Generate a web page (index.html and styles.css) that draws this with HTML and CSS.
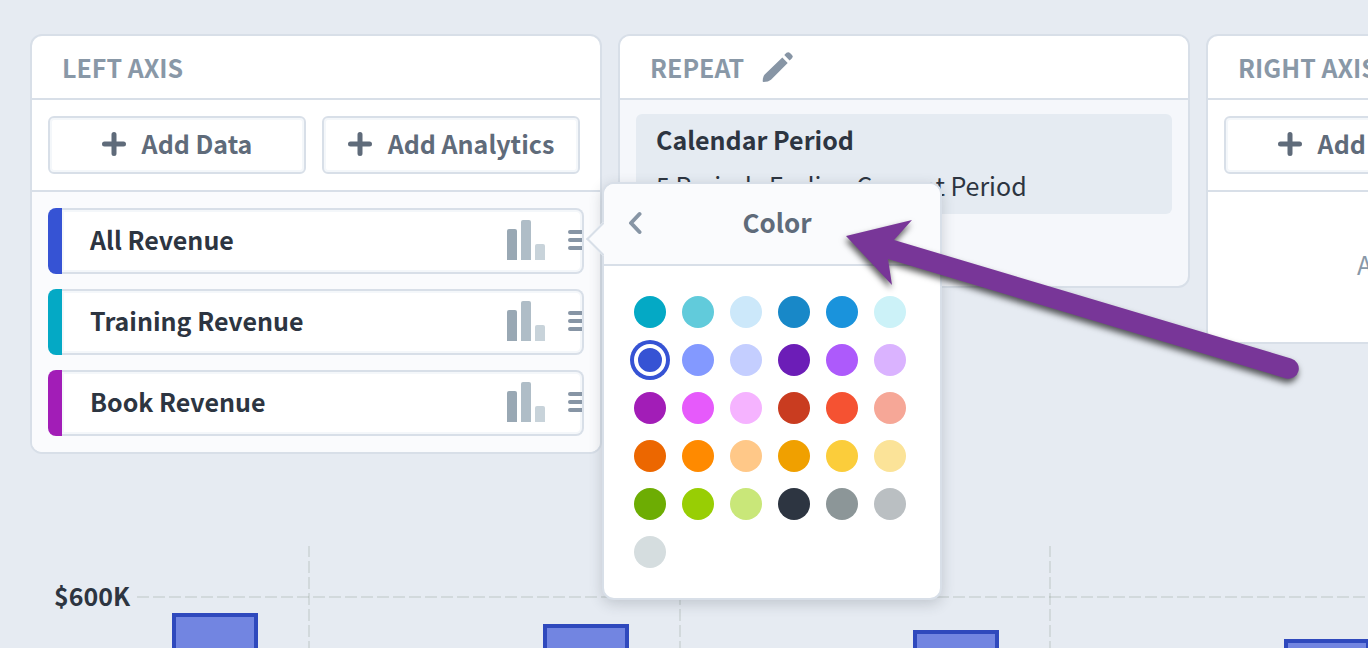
FILE: index.html
```html
<!DOCTYPE html>
<html lang="en">
<head>
<meta charset="utf-8">
<title>Chart builder</title>
<link rel="stylesheet" href="styles.css">
</head>
<body>
<svg class="symbols" aria-hidden="true">
  <symbol id="plus" viewBox="0 0 24 24"><path d="M12 2.500v19M2.500 12h19" stroke="currentColor" stroke-width="5" stroke-linecap="round"/></symbol>
  <symbol id="bars" viewBox="0 0 38 40">
    <path d="M0 40V11q0-2 2-2h6q2 0 2 2v29z" fill="#99a8b4"/>
    <path d="M14 40V2q0-2 2-2h6q2 0 2 2v38z" fill="#afbdc7"/>
    <path d="M28 40V26q0-2 2-2h6q2 0 2 2v14z" fill="#c8d3da"/>
  </symbol>
  <symbol id="menu" viewBox="0 0 14 22"><path d="M2 3h16M2 11h16M2 19h16" stroke="#8795a5" stroke-width="4" stroke-linecap="round"/></symbol>
</svg>

<main class="builder">
  <div class="panels">
    <section class="panel">
      <header class="panel-head"><h2>LEFT AXIS</h2></header>
      <div class="toolbar">
        <button class="btn" type="button"><svg class="plus"><use href="#plus"/></svg><span>Add Data</span></button>
        <button class="btn" type="button"><svg class="plus"><use href="#plus"/></svg><span>Add Analytics</span></button>
      </div>
      <ul class="series-list">
        <li class="series blue"><div class="card"><span class="name">All Revenue</span><svg class="bars"><use href="#bars"/></svg><button class="menu" type="button" aria-label="All Revenue options"><svg><use href="#menu"/></svg></button></div></li>
        <li class="series teal"><div class="card"><span class="name">Training Revenue</span><svg class="bars"><use href="#bars"/></svg><button class="menu" type="button" aria-label="Training Revenue options"><svg><use href="#menu"/></svg></button></div></li>
        <li class="series purple"><div class="card"><span class="name">Book Revenue</span><svg class="bars"><use href="#bars"/></svg><button class="menu" type="button" aria-label="Book Revenue options"><svg><use href="#menu"/></svg></button></div></li>
      </ul>

      <div class="popover" role="dialog" aria-label="Color">
        <header class="popover-head">
          <button class="back" type="button" aria-label="Back"><svg viewBox="0 0 14 24"><path d="M11.500 3L3 12l8.500 9" fill="none" stroke="#8795a5" stroke-width="4" stroke-linecap="round" stroke-linejoin="round"/></svg></button>
          <h3>Color</h3>
        </header>
        <div class="swatches">
          <button type="button" aria-label="Teal" style="background:#04a9c5"></button>
          <button type="button" aria-label="Light teal" style="background:#61cbdb"></button>
          <button type="button" aria-label="Pale blue" style="background:#cce8fa"></button>
          <button type="button" aria-label="Ocean" style="background:#1888c8"></button>
          <button type="button" aria-label="Sky" style="background:#1a93dc"></button>
          <button type="button" aria-label="Pale cyan" style="background:#ccf2f8"></button>
          <button type="button" aria-label="Blue" aria-pressed="true" class="selected" style="background:#3653d4"></button>
          <button type="button" aria-label="Periwinkle" style="background:#8399ff"></button>
          <button type="button" aria-label="Pale periwinkle" style="background:#c4ceff"></button>
          <button type="button" aria-label="Indigo" style="background:#6c1db7"></button>
          <button type="button" aria-label="Violet" style="background:#ad5afb"></button>
          <button type="button" aria-label="Lavender" style="background:#dab3ff"></button>
          <button type="button" aria-label="Purple" style="background:#a21db7"></button>
          <button type="button" aria-label="Magenta" style="background:#e65afb"></button>
          <button type="button" aria-label="Pink" style="background:#f5b3ff"></button>
          <button type="button" aria-label="Brick" style="background:#c93c20"></button>
          <button type="button" aria-label="Red" style="background:#f55232"></button>
          <button type="button" aria-label="Salmon" style="background:#f6a797"></button>
          <button type="button" aria-label="Dark orange" style="background:#ec6700"></button>
          <button type="button" aria-label="Orange" style="background:#ff8a00"></button>
          <button type="button" aria-label="Peach" style="background:#ffc888"></button>
          <button type="button" aria-label="Amber" style="background:#f0a000"></button>
          <button type="button" aria-label="Yellow" style="background:#fbcd3b"></button>
          <button type="button" aria-label="Pale yellow" style="background:#fbe398"></button>
          <button type="button" aria-label="Green" style="background:#6dad03"></button>
          <button type="button" aria-label="Lime" style="background:#98ce04"></button>
          <button type="button" aria-label="Pale lime" style="background:#c9e779"></button>
          <button type="button" aria-label="Charcoal" style="background:#2d3541"></button>
          <button type="button" aria-label="Gray" style="background:#8c9698"></button>
          <button type="button" aria-label="Silver" style="background:#babfc2"></button>
          <button type="button" aria-label="Pale gray" style="background:#d5dddf"></button>
        </div>
      </div>
    </section>

    <section class="panel repeat">
      <header class="panel-head">
        <h2>REPEAT</h2>
        <button class="edit" type="button" aria-label="Edit repeat"><svg viewBox="0 0 32 32"><path d="M20.300 6.600l5.400 5.400L9 28.700Q6.500 31 1.500 31q-.9 0-.8-1Q1 25 2.700 23.400zM22.300 4l2.200-2.200Q26.500.4 28 2l2 2q1.700 1.500 0 3.200L27.600 9.500z" fill="#8795a5"/></svg></button>
      </header>
      <div class="repeat-body">
        <div class="period">
          <strong>Calendar Period</strong>
          <span>5 Periods Ending Current Period</span>
        </div>
      </div>
    </section>

    <section class="panel">
      <header class="panel-head"><h2>RIGHT AXIS</h2></header>
      <div class="toolbar">
        <button class="btn" type="button"><svg class="plus"><use href="#plus"/></svg><span>Add Data</span></button>
        <button class="btn" type="button"><svg class="plus"><use href="#plus"/></svg><span>Add Analytics</span></button>
      </div>
      <p class="empty">Add Data or Analytics</p>
    </section>
  </div>

  <div class="chart">
    <span class="tick">$600K</span>
    <svg class="plot" role="img" aria-label="Revenue by period">
      <path d="M0 51H1400" class="grid" stroke-dasharray="12 4"/>
      <path d="M172 0V102M543 0V102M913 0V102" class="grid" stroke-dasharray="12 4" stroke-dashoffset="1"/>
      <g class="columns">
        <rect x="37" y="69" width="82" height="60"/>
        <rect x="408" y="80" width="82" height="60"/>
        <rect x="778" y="86" width="82" height="60"/>
        <rect x="1149" y="95" width="82" height="60"/>
      </g>
    </svg>
  </div>

  <svg class="pointer" viewBox="0 0 470 170" aria-hidden="true">
    <path d="M6 16L72 0L54 20L451 138.500A10 10 0 0 1 446 158.500L48 39L52 65Z" fill="#783698"/>
  </svg>
</main>
</body>
</html>
```

FILE: styles.css
```css
* { box-sizing: border-box; }
body {
  margin: 0;
  overflow: hidden;
  background: #e6ebf2;
  color: #2d3541;
  font: 25px/32px "Noto Sans CJK SC", "Open Sans", sans-serif;
}
h2, h3, p, ul { margin: 0; padding: 0; font-size: inherit; }
button { font: inherit; border: 0; padding: 0; background: none; color: inherit; cursor: pointer; }
svg { display: block; }
.symbols { display: none; }

.builder {
  position: relative;
  display: flex;
  flex-direction: column;
  min-height: 100vh;
  padding: 34px 0 0 30px;
  overflow: hidden;
}
.panels {
  display: grid;
  grid-template-columns: repeat(3, minmax(572px, 1fr));
  gap: 16px;
  align-items: start;
}
.panel {
  position: relative;
  background: #fff;
  border: 2px solid #d8dfe8;
  border-radius: 12px;
}
.panel-head {
  display: flex;
  align-items: center;
  gap: 18px;
  height: 64px;
  padding: 0 30px;
  border-bottom: 2px solid #d8dfe8;
  color: #8998a7;
}
.edit svg { width: 32px; height: 32px; }

.toolbar {
  display: grid;
  grid-template-columns: 1fr 1fr;
  gap: 16px;
  padding: 16px 20px 16px 16px;
  border-bottom: 2px solid #d8dfe8;
}
.btn {
  display: flex;
  align-items: center;
  justify-content: center;
  gap: 16px;
  height: 58px;
  padding-bottom: 2px;
  border: 2px solid #d8dfe8;
  border-radius: 6px;
  box-shadow: inset 0 0 0 2px #f4f7fa;
  background: #fff;
  color: #5f6b7a;
  font-weight: 700;
}
.btn span { padding-bottom: 2px; }
.plus { width: 24px; height: 24px; }

.series-list {
  display: grid;
  gap: 15px;
  padding: 16px;
  list-style: none;
  background: #fafbfd;
  border-radius: 0 0 10px 10px;
}
.series {
  height: 66px;
  padding-left: 14px;
  border-radius: 8px;
}
.card {
  display: flex;
  align-items: center;
  height: 100%;
  padding-bottom: 2px;
  overflow: hidden;
  border: 2px solid #d8dfe8;
  border-left: 0;
  border-radius: 0 8px 8px 0;
  background: #fff;
  box-shadow: inset 0 0 0 2px #f4f7fa;
}
.blue { background: linear-gradient(90deg, #3653d4 14px, transparent 14px); }
.teal { background: linear-gradient(90deg, #04a9c5 14px, transparent 14px); }
.purple { background: linear-gradient(90deg, #a21db7 14px, transparent 14px); }
.name { flex: 1; padding: 0 0 2px 28px; font-weight: 700; }
.bars { width: 38px; height: 40px; margin-right: 23px; }
.menu svg { width: 14px; height: 22px; }

.repeat { background: #f5f7fb; }
.repeat .panel-head { background: #fff; border-radius: 10px 10px 0 0; }
.repeat-body { padding: 14px 16px 72px; }
.period {
  display: grid;
  gap: 14px;
  height: 100px;
  padding: 9px 20px 13px;
  border-radius: 6px;
  background: #e5ebf2;
}
.empty { padding: 56px 20px 62px 149px; color: #8998a7; white-space: nowrap; }

.popover {
  position: absolute;
  z-index: 2;
  top: 146px;
  left: calc(100% + 2px);
  width: 340px;
  background: #fff;
  border: 2px solid #d8dfe8;
  border-radius: 12px;
  box-shadow: 0 4px 14px rgba(45, 53, 65, 0.2);
}
.popover::before {
  content: "";
  position: absolute;
  top: 43px;
  left: -13px;
  width: 22px;
  height: 22px;
  transform: rotate(45deg);
  border: solid #d8dfe8;
  border-width: 0 0 2px 2px;
  background: #fafbfd;
}
.popover-head {
  position: relative;
  display: grid;
  grid-template-columns: 14px 1fr 14px;
  align-items: center;
  height: 82px;
  padding: 0 24px 2px;
  border-bottom: 2px solid #d8dfe8;
  border-radius: 10px 10px 0 0;
  background: #fafbfd;
  color: #5f6b7a;
  text-align: center;
}
.popover-head h3 { padding: 0 0 2px 10px; font-size: 26px; }
.back svg { width: 14px; height: 24px; }
.swatches {
  display: grid;
  grid-template-columns: repeat(6, 32px);
  gap: 16px;
  padding: 30px;
}
.swatches button { width: 32px; height: 32px; border-radius: 50%; }
.swatches .selected {
  border: 4px solid #fff;
  box-shadow: 0 0 0 4px #3653d4;
}

.chart {
  position: absolute;
  top: 546px;
  left: 54px;
  right: 0;
  bottom: 0;
  display: grid;
  grid-template-columns: 83px 1fr;
  overflow: hidden;
}
.tick { padding-top: 33px; font-weight: 700; }
.plot { width: 100%; height: 102px; overflow: hidden; }
.grid { fill: none; stroke: #6b7b6b; stroke-opacity: 0.16; stroke-width: 2; }
.columns { fill: #7285e1; stroke: #2f49bd; stroke-width: 4; }

.pointer {
  position: absolute;
  z-index: 3;
  top: 220px;
  left: 840px;
  width: 470px;
  height: 170px;
  overflow: visible;
  filter: drop-shadow(-1px 4px 3px rgba(0, 0, 0, 0.65));
  pointer-events: none;
}
```
